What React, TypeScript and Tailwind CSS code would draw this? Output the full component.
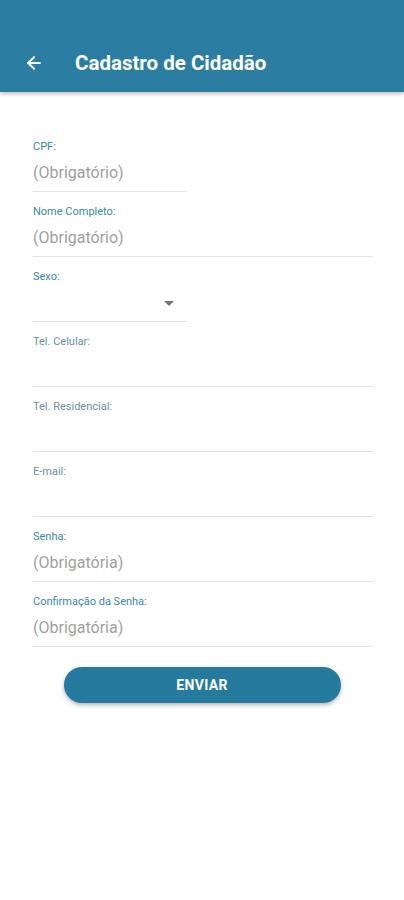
import { ArrowLeft } from "lucide-react";

type Field = {
  label: string;
  placeholder?: string;
  short?: boolean;
  select?: boolean;
  muted?: boolean;
};

const fields: Field[] = [
  { label: "CPF:", placeholder: "(Obrigatório)", short: true },
  { label: "Nome Completo:", placeholder: "(Obrigatório)" },
  { label: "Sexo:", short: true, select: true },
  { label: "Tel. Celular:", muted: true },
  { label: "Tel. Residencial:", muted: true },
  { label: "E-mail:", muted: true },
  { label: "Senha:", placeholder: "(Obrigatória)" },
  { label: "Confirmação da Senha:", placeholder: "(Obrigatória)" },
];

export default function App() {
  return (
    <div className="min-h-[900px] w-[404px] bg-white" style={{ fontFamily: "Roboto, 'Liberation Sans', sans-serif" }}>
      {/* Topo */}
      <header className="h-[92px] bg-[#2b7ea1] shadow-[0_2px_4px_rgba(0,0,0,0.25)] flex items-end pb-[17px] px-[24px]">
        <ArrowLeft className="w-[20px] h-[20px] mb-[2px] text-white" strokeWidth={2.5} />
        <h1 className="ml-[31px] text-white text-[20.5px] font-bold leading-[24px]">Cadastro de Cidadão</h1>
      </header>

      <form className="px-[33px] pt-[35px] flex flex-col">
        {fields.map((f) => (
          <div key={f.label} className="pt-[13px]">
            <label
              className={`block text-[11px] leading-[14px] ${f.muted ? "text-[#6a929e]" : "text-[#3a87a8]"}`}
            >
              {f.label}
            </label>
            <div
              className={`h-[38px] border-b border-[#e4e4e4] flex items-center ${f.short ? "w-[154px]" : "w-[340px]"}`}
            >
              {f.placeholder && <span className="text-[16px] text-[#a0a0a0]">{f.placeholder}</span>}
              {f.select && (
                <span className="ml-auto mr-[13px] mt-[2px] w-0 h-0 border-l-[5px] border-r-[5px] border-t-[5px] border-l-transparent border-r-transparent border-t-[#757575]" />
              )}
            </div>
          </div>
        ))}

        <div className="flex justify-center pt-[20px]">
          <button
            type="button"
            className="w-[277px] h-[36px] rounded-full bg-[#257b9e] text-white text-[14px] font-bold tracking-wide shadow-[0_2px_4px_rgba(0,0,0,0.3)]"
          >
            ENVIAR
          </button>
        </div>
      </form>
    </div>
  );
}
